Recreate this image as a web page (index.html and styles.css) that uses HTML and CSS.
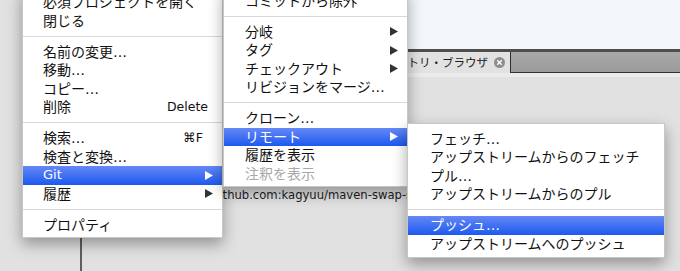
FILE: index.html
```html
<!DOCTYPE html>
<html lang="ja">
  <head>
    <meta charset="UTF-8" />
    <title>Git メニュー</title>
    <link rel="stylesheet" href="styles.css">
  </head>
  <body>
    <div class="desk">
      <div class="tree">
        <div class="tree-line"></div>
      </div>
      <div class="workspace">
        <div class="editor"></div>
        <div class="tabbar">
          <div class="tab">
            <span>リポジトリ・ブラウザ</span>
            <svg class="close" width="11" height="11" viewBox="0 0 11 11">
              <circle cx="5.5" cy="5.5" r="5.5" fill="#8e8e8e" />
              <path d="M3.3 3.3 L7.7 7.7 M7.7 3.3 L3.3 7.7" stroke="#fff" stroke-width="1.4" />
            </svg>
          </div>
          <div class="tab-fill"></div>
        </div>
        <div class="strip"></div>
        <div class="remote-url">github.com:kagyuu/maven-swap-sample.git</div>
      </div>
    </div>

    <!-- file menu -->
    <div class="menu menu-file">
      <div class="item">必須プロジェクトを開く</div>
      <div class="item">閉じる</div>
      <div class="sep"></div>
      <div class="item">名前の変更…</div>
      <div class="item">移動…</div>
      <div class="item">コピー…</div>
      <div class="item"><span>削除</span><span class="key">Delete</span></div>
      <div class="sep"></div>
      <div class="item"><span>検索…</span><span class="key key-cmd">⌘F</span></div>
      <div class="item">検査と変換…</div>
      <div class="item selected">
        <span class="lat">Git</span>
        <svg class="arrow" width="8" height="9" viewBox="0 0 8 9"><polygon points="0,0 8,4.5 0,9" /></svg>
      </div>
      <div class="item">
        <span>履歴</span>
        <svg class="arrow" width="8" height="9" viewBox="0 0 8 9"><polygon points="0,0 8,4.5 0,9" /></svg>
      </div>
      <div class="sep"></div>
      <div class="item">プロパティ</div>
    </div>

    <!-- git submenu -->
    <div class="menu menu-git">
      <div class="item">コミットから除外</div>
      <div class="sep"></div>
      <div class="item">
        <span>分岐</span>
        <svg class="arrow" width="8" height="9" viewBox="0 0 8 9"><polygon points="0,0 8,4.5 0,9" /></svg>
      </div>
      <div class="item">
        <span>タグ</span>
        <svg class="arrow" width="8" height="9" viewBox="0 0 8 9"><polygon points="0,0 8,4.5 0,9" /></svg>
      </div>
      <div class="item">
        <span>チェックアウト</span>
        <svg class="arrow" width="8" height="9" viewBox="0 0 8 9"><polygon points="0,0 8,4.5 0,9" /></svg>
      </div>
      <div class="item">リビジョンをマージ…</div>
      <div class="sep"></div>
      <div class="item">クローン…</div>
      <div class="item selected">
        <span>リモート</span>
        <svg class="arrow" width="8" height="9" viewBox="0 0 8 9"><polygon points="0,0 8,4.5 0,9" /></svg>
      </div>
      <div class="item">履歴を表示</div>
      <div class="item disabled">注釈を表示</div>
    </div>

    <!-- remote submenu -->
    <div class="menu menu-remote">
      <div class="item">フェッチ…</div>
      <div class="item">アップストリームからのフェッチ</div>
      <div class="item">プル…</div>
      <div class="item">アップストリームからのプル</div>
      <div class="sep"></div>
      <div class="item selected">プッシュ…</div>
      <div class="item">アップストリームへのプッシュ</div>
    </div>
  </body>
</html>
```

FILE: styles.css
```css
body {
  margin: 0;
  width: 680px;
  height: 271px;
  overflow: hidden;
  position: relative;
  background-color: #e1e1e1;
  font-family: "DejaVu Sans", "Noto Sans CJK JP", sans-serif;
  color: #111;
}

/* background window */
.desk {
  display: grid;
  grid-template-columns: 200px 1fr;
  height: 271px;
}

.tree {
  padding: 100px 0 0 80px;
}

.tree-line {
  width: 2px;
  height: 100%;
  background-color: #5f5f5f;
}

.editor {
  height: 49px;
  background-color: #f3f6fb;
}

.tabbar {
  display: flex;
  height: 21px;
  border-top: 3px solid #4e4e4e;
}

.tab {
  margin-left: 160px;
  display: flex;
  align-items: center;
  gap: 6px;
  padding: 0 5px 1px 13px;
  background-color: #e2e2e2;
  border-right: 1px solid #2e2e2e;
  font-family: "Noto Sans CJK JP", sans-serif;
  font-size: 11.5px;
  line-height: 14px;
  color: #1a1a1a;
}

.tab-fill {
  flex: 1;
  background: linear-gradient(#a8a8a8, #9b9b9b);
  border-bottom: 1px solid #333;
}

.strip {
  height: 4px;
  background-color: #ebebeb;
}

.remote-url {
  margin-top: 110px;
  padding-left: 12px;
  font-family: "DejaVu Sans", sans-serif;
  font-size: 11.6px;
  line-height: 16px;
  color: #1c1c1c;
  white-space: nowrap;
}

/* popup menus */
.menu {
  position: absolute;
  box-sizing: border-box;
  padding: 3px 0;
  background-color: #fff;
  border: 1px solid rgba(0, 0, 0, 0.22);
  box-shadow: 0 6px 14px rgba(0, 0, 0, 0.35);
  font-size: 14px;
}

.menu-file {
  left: 22px;
  top: -11px;
  width: 201px;
  z-index: 1;
}

.menu-git {
  left: 223px;
  top: -12.5px;
  width: 185px;
  z-index: 2;
}

.menu-remote {
  left: 407px;
  top: 123px;
  width: 258px;
  padding: 5.5px 0 3.5px;
  z-index: 3;
}

.item {
  display: flex;
  align-items: center;
  justify-content: space-between;
  height: 18.5px;
  line-height: 18px;
  padding: 0 9px 0 21px;
  white-space: nowrap;
}

.menu-file .item {
  padding-left: 20px;
}

.menu-remote .item {
  padding-left: 22px;
}

.item.selected {
  background: linear-gradient(#6589f5, #1d59f0);
  color: #fff;
}

.item.disabled {
  color: #a8a8a8;
}

.lat {
  font-size: 13px;
}

.key {
  font-size: 12.5px;
  margin-right: 5px;
}

.key-cmd {
  margin-right: 10px;
}

.arrow {
  fill: #333;
}

.selected .arrow {
  fill: #fff;
}

.sep {
  height: 1px;
  margin: 5.5px 0 6px;
  background-color: #d8d8d8;
}
```
